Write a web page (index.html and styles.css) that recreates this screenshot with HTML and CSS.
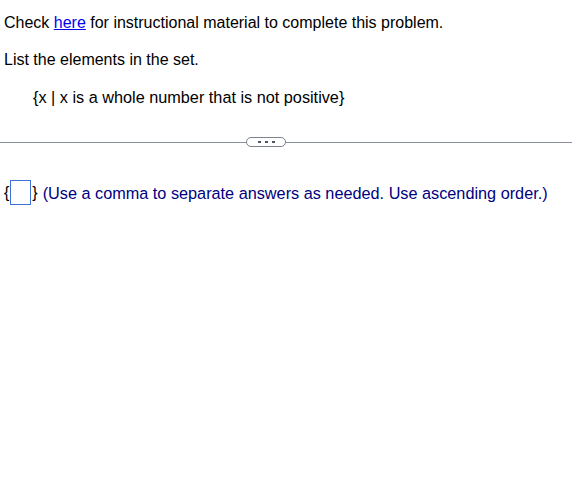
FILE: index.html
```html
<!DOCTYPE html>
<html>
<head>
<meta charset="utf-8">
<link rel="stylesheet" href="styles.css">
</head>
<body>
<div class="page">
  <p class="line first">Check <a href="#" class="link">here</a> for instructional material to complete this problem.</p>
  <p class="line">List the elements in the set.</p>
  <p class="line set">{x | x is a whole number that is not positive}</p>
  <div class="divider">
    <span class="rule"></span>
    <span class="more"><i></i><i></i><i></i></span>
    <span class="rule"></span>
  </div>
  <div class="answer">
    <span class="brace">{</span><span class="box"></span><span class="brace">}</span>
    <span class="hint">(Use a comma to separate answers as needed. Use ascending order.)</span>
  </div>
</div>
</body>
</html>
```
FILE: styles.css
```css
html, body { margin: 0; padding: 0; background: #fff; }
body {
  font-family: "Liberation Sans", Arial, sans-serif;
  font-size: 16px;
  color: #000;
}
.page { padding: 0 14px 0 4px; }
.line { margin: 0; line-height: 20px; }
.first { padding-top: 13px; }
.line + .line { margin-top: 17px; }
.set { padding-left: 29px; margin-top: 17px !important; font-size: 16.25px; }
.link { color: #0000ee; text-decoration: underline; }
.divider {
  display: flex;
  align-items: center;
  margin: 30px 0 0 -4px;
  height: 10px;
}
.rule { flex: 1; height: 1px; background: #8a909b; }
.rule:first-child { flex: 0 0 246px; }
.more {
  width: 38px; height: 8px;
  border: 1px solid #7c828c;
  border-radius: 5px;
  display: flex; align-items: center; justify-content: center; gap: 4px;
  background: #fff;
}
.more i { width: 3px; height: 2px; background: #505560; display: block; }
.answer {
  display: flex; align-items: center;
  margin-top: 33px;
  color: #000080;
}
.brace { color: #000; line-height: 20px; }
.box {
  width: 19px; height: 23px;
  border: 1px solid #3c72d8;
  margin: 0 1px;
}
.hint { margin-left: 5px; line-height: 20px; font-size: 16.25px; }
```
